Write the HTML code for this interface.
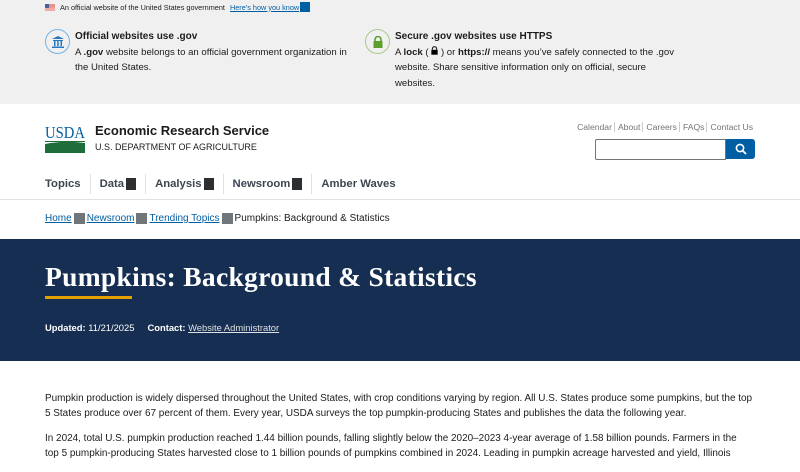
<!DOCTYPE html>
<html><head><meta charset="utf-8"><style>
*{margin:0;padding:0;box-sizing:border-box}
body{width:800px;height:450px;overflow:hidden;font-family:"Liberation Sans",sans-serif;background:#fff;color:#1b1b1b}
.banner{background:#f0f0f0;height:104px;position:relative;font-size:12px}
.top{position:absolute;left:45px;top:1px;font-size:7.3px;color:#1b1b1b;display:flex;align-items:center;height:12px}
.flag{width:10px;height:7px;background:linear-gradient(#e8908a 0 50%,#f1aaa5 50%);position:relative;margin-right:5px}
.flag:before{content:"";position:absolute;left:0;top:0;width:4px;height:4px;background:#4a5f9c}
.top a{color:#005ea2;text-decoration:underline;margin-left:5px}
.sq{display:inline-block;width:10px;height:10px;background:#005ea2;margin-left:1px}
.col{position:absolute;top:29px;width:275px;line-height:15.5px;font-size:9.6px}
.col b{display:block}
.col b.h{font-size:10px}
.ic{position:absolute;left:-30px;top:0;width:25px;height:25px;border-radius:50%;border:1px solid;display:flex;align-items:center;justify-content:center}
.logo{position:absolute;left:45px;top:125px}
.ers{position:absolute;left:95px;top:123px;font-size:13px;font-weight:bold}
.dept{position:absolute;left:95px;top:142px;font-size:9px;color:#1b1b1b}
.links{position:absolute;right:45px;top:122px;font-size:8.6px;color:#71767a}
.links span{margin-left:3px;padding-right:2px;border-right:1px solid #ccc}
.links span:last-child{border:0}
.search{position:absolute;left:595px;top:139px;width:131px;height:21px;border:1px solid #71767a;border-radius:2px 0 0 2px}
.sbtn{position:absolute;left:726px;top:139px;width:29px;height:20px;background:#005ea2;border-radius:0 3px 3px 0;display:flex;align-items:center;justify-content:center}
.nav{position:absolute;left:45px;top:174px;font-size:11.3px;font-weight:bold;color:#3d4551;display:flex;align-items:center}
.nav span{padding:0 9px;border-left:1px solid #dfe1e2;height:20px;display:flex;align-items:center}
.nav span:first-child{padding-left:0;border:0}
.blk{display:inline-block;width:10px;height:12px;background:#2d2e2f;margin-left:2px}
.bc{position:absolute;left:45px;top:213px;font-size:10px;display:flex;align-items:center;color:#1b1b1b}
.bc a{color:#005ea2;text-decoration:underline}
.gs{display:inline-block;width:11px;height:11px;background:#71767a;margin:0 2px}
.hero{position:absolute;left:0;top:239px;width:800px;height:122px;background:#162e51;color:#fff}
.hero h1{position:absolute;left:45px;top:22px;font-family:"Liberation Serif",serif;font-size:27.5px;font-weight:bold;letter-spacing:.3px}
.bar{position:absolute;left:45px;top:57px;width:87px;height:3px;background:#e5a000}
.meta{position:absolute;left:45px;top:83px;font-size:9.4px}
.meta u{color:#dfe1e2}
.body{position:absolute;left:45px;top:392px;width:740px;font-size:9.95px;line-height:14.5px;color:#1b1b1b;white-space:nowrap}
.body p{margin-bottom:11px}
</style></head><body>
<div class="banner">
<div class="top"><div class="flag"></div>An official website of the United States government <a>Here’s how you know</a><span class="sq"></span></div>
<div class="col" style="left:75px"><div class="ic" style="border-color:#73b3e7"><svg width="12" height="12" viewBox="0 0 12 12"><path d="M6 0L0 3h12zM1 4h10v1H1zM2 5h1.5v5H2zM5.2 5h1.5v5H5.2zM8.5 5H10v5H8.5zM0 10.5h12V12H0z" fill="#2378c3"/></svg></div><b class="h">Official websites use .gov</b>A <b style="display:inline">.gov</b> website belongs to an official government organization in<br>the United States.</div>
<div class="col" style="left:395px;width:300px"><div class="ic" style="border-color:#a8c98a"><svg width="10" height="12" viewBox="0 0 10 12"><path d="M2 5V3.5a3 3 0 016 0V5" stroke="#5e9f2b" stroke-width="1.6" fill="none"/><rect x="0.5" y="5" width="9" height="7" fill="#5e9f2b"/></svg></div><b class="h">Secure .gov websites use HTTPS</b>A <b style="display:inline">lock</b> ( <svg width="7" height="9" viewBox="0 0 10 12"><path d="M2 5V3.5a3 3 0 016 0V5" stroke="#1b1b1b" stroke-width="1.6" fill="none"/><rect x="0.5" y="5" width="9" height="7"/></svg> ) or <b style="display:inline">https://</b> means you’ve safely connected to the .gov<br>website. Share sensitive information only on official, secure<br>websites.</div>
</div>
<div class="logo"><svg width="40" height="28" viewBox="0 0 40 28"><text x="0" y="13" font-family="Liberation Serif,serif" font-size="17" fill="#005ea2" textLength="40" lengthAdjust="spacingAndGlyphs">USDA</text><path d="M0 16 H40 V17 H0z" fill="#1f6e3a"/><path d="M0 19 Q20 15 40 18 V28 H0z" fill="#1f6e3a"/></svg></div>
<div class="ers">Economic Research Service</div>
<div class="dept">U.S. DEPARTMENT OF AGRICULTURE</div>
<div class="links"><span>Calendar</span><span>About</span><span>Careers</span><span>FAQs</span><span>Contact Us</span></div>
<div class="search"></div>
<div class="sbtn"><svg width="12" height="12" viewBox="0 0 12 12"><circle cx="5" cy="5" r="3.6" stroke="#fff" stroke-width="1.6" fill="none"/><path d="M7.5 7.5L11 11" stroke="#fff" stroke-width="1.8"/></svg></div>
<div class="nav"><span>Topics</span><span>Data<i class="blk"></i></span><span>Analysis<i class="blk"></i></span><span>Newsroom<i class="blk"></i></span><span>Amber Waves</span></div>
<div style="position:absolute;left:0;top:199px;width:800px;border-top:1px solid #dfe1e2"></div>
<div class="bc"><a>Home</a><i class="gs"></i><a>Newsroom</a><i class="gs"></i><a>Trending Topics</a><i class="gs"></i>Pumpkins: Background &amp; Statistics</div>
<div class="hero"><h1>Pumpkins: Background &amp; Statistics</h1><div class="bar"></div>
<div class="meta"><b>Updated:</b> 11/21/2025 &nbsp;&nbsp;&nbsp; <b>Contact:</b> <u>Website Administrator</u></div></div>
<div class="body"><p>Pumpkin production is widely dispersed throughout the United States, with crop conditions varying by region. All U.S. States produce some pumpkins, but the top<br>5 States produce over 67 percent of them. Every year, USDA surveys the top pumpkin-producing States and publishes the data the following year.</p>
<p>In 2024, total U.S. pumpkin production reached 1.44 billion pounds, falling slightly below the 2020–2023 4-year average of 1.58 billion pounds. Farmers in the<br>top 5 pumpkin-producing States harvested close to 1 billion pounds of pumpkins combined in 2024. Leading in pumpkin acreage harvested and yield, Illinois</p></div>
</body></html>
